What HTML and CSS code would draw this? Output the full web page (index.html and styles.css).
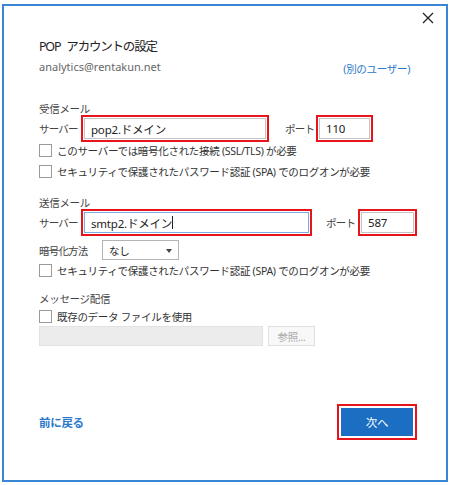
FILE: index.html
```html
<!DOCTYPE html>
<html lang="ja">
<head>
    <meta charset="UTF-8">
    <title>POP アカウントの設定</title>
    <link rel="stylesheet" href="styles.css">
</head>
<body>
    <div class="dialog">
        <div class="topbar">
            <svg class="close" width="12" height="12" viewBox="0 0 12 12">
                <path d="M1 1 L11 11 M11 1 L1 11" stroke="#222" stroke-width="1.3" fill="none"/>
            </svg>
        </div>

        <h1 class="title">POP アカウントの設定</h1>
        <div class="account">
            <span class="email">analytics@rentakun.net</span>
            <a class="link" href="#">(別のユーザー)</a>
        </div>

        <div class="section">受信メール</div>
        <div class="server-row">
            <span class="label">サーバー</span>
            <span class="hl hl-server1"><span class="field">pop2.ドメイン</span></span>
            <span class="label port-label1">ポート</span>
            <span class="hl hl-port1"><span class="field">110</span></span>
        </div>
        <div class="check check-first"><span class="box"></span>このサーバーでは暗号化された接続 (SSL/TLS) が必要</div>
        <div class="check"><span class="box"></span>セキュリティで保護されたパスワード認証 (SPA) でのログオンが必要</div>

        <div class="section section-out">送信メール</div>
        <div class="server-row">
            <span class="label">サーバー</span>
            <span class="hl hl-server2"><span class="field field-focus">smtp2.ドメイン<span class="caret"></span></span></span>
            <span class="label port-label2">ポート</span>
            <span class="hl hl-port2"><span class="field">587</span></span>
        </div>
        <div class="enc-row">
            <span class="label">暗号化方法</span>
            <span class="select">なし<span class="arrow"></span></span>
        </div>
        <div class="check"><span class="box"></span>セキュリティで保護されたパスワード認証 (SPA) でのログオンが必要</div>

        <div class="section section-msg">メッセージ配信</div>
        <div class="check check-file"><span class="box"></span>既存のデータ ファイルを使用</div>
        <div class="file-row">
            <span class="file-path"></span>
            <span class="browse">参照...</span>
        </div>

        <div class="footer">
            <a class="back" href="#">前に戻る</a>
            <span class="hl hl-next"><span class="next">次へ</span></span>
        </div>
    </div>
</body>
</html>
```

FILE: styles.css
```css
body {
    margin: 0;
    background-color: white;
    font-family: "Noto Sans", "Noto Sans CJK JP", sans-serif;
    font-size: 10.5px;
    letter-spacing: -0.3px;
    color: #444;
}
.dialog {
    box-sizing: border-box;
    width: 446px;
    height: 478px;
    margin: 4px 0 0 2px;
    border: 2px solid #3a86d6;
    padding: 0 0 0 35px;
    display: flex;
    flex-direction: column;
}
.topbar {
    display: flex;
    justify-content: flex-end;
    padding: 6px 12px 0 0;
    height: 14px;
}
.title {
    margin: 12px 0 0 0;
    font-size: 12.5px;
    letter-spacing: -1.2px;
    word-spacing: 4px;
    font-weight: normal;
    color: #222;
    line-height: 18px;
}
.account {
    display: flex;
    justify-content: space-between;
    align-items: flex-end;
    padding-right: 36px;
    line-height: 16px;
    margin-top: 3px;
}
.email {
    font-size: 11px;
    letter-spacing: 0;
    color: #666;
}
.link {
    color: #2a78cc;
    text-decoration: none;
    margin-bottom: -2px;
}
.section {
    margin-top: 26px;
    line-height: 16px;
}
.section-out {
    margin-top: 13px;
}
.section-msg {
    margin-top: 10px;
}
.server-row {
    display: flex;
    align-items: center;
    height: 27px;
    margin-top: -2px;
}
.label {
    width: 42px;
    flex-shrink: 0;
    white-space: nowrap;
    letter-spacing: -0.8px;
}
.hl {
    box-sizing: border-box;
    display: inline-block;
    flex-shrink: 0;
    border: 2px solid #e8141c;
    padding: 1px;
    height: 27px;
}
.hl-server1 {
    width: 188px;
}
.port-label1 {
    margin-left: 16px;
    width: 31px;
}
.hl-port1 {
    width: 57px;
}
.hl-server2 {
    width: 231px;
}
.port-label2 {
    margin-left: 14px;
    width: 32px;
}
.hl-port2 {
    width: 59px;
}
.field {
    box-sizing: border-box;
    display: flex;
    align-items: center;
    height: 100%;
    border: 1px solid #c4c4c4;
    padding-left: 6px;
    color: #222;
    font-size: 11.5px;
    letter-spacing: -0.2px;
}
.field-focus {
    border-color: #7aaee0;
}
.caret {
    display: inline-block;
    width: 1px;
    height: 13px;
    background-color: #222;
}
.check {
    display: flex;
    align-items: center;
    height: 21px;
    color: #333;
    white-space: nowrap;
}
.check-first {
    margin-top: -2px;
}
.box {
    box-sizing: border-box;
    flex-shrink: 0;
    width: 13px;
    height: 13px;
    border: 1px solid #9a9a9a;
    margin-right: 5px;
}
.enc-row {
    display: flex;
    align-items: center;
    margin-top: 4px;
    height: 20px;
}
.enc-row .label {
    width: 63px;
}
.select {
    box-sizing: border-box;
    width: 77px;
    height: 20px;
    border: 1px solid #b4b4b4;
    display: flex;
    align-items: center;
    padding-left: 6px;
    color: #222;
    position: relative;
}
.arrow {
    position: absolute;
    right: 6px;
    top: 8px;
    border-left: 3px solid transparent;
    border-right: 3px solid transparent;
    border-top: 4px solid #444;
}
.check-file {
    height: 18px;
}
.file-row {
    display: flex;
    margin-top: 1px;
    height: 20px;
}
.file-path {
    width: 224px;
    background-color: #ececec;
    border: 1px solid #e2e2e2;
    box-sizing: border-box;
}
.browse {
    box-sizing: border-box;
    width: 47px;
    margin-left: 5px;
    border: 1px solid #e0e0e0;
    background-color: #f8f8f8;
    color: #aaa;
    display: flex;
    align-items: center;
    justify-content: center;
}
.footer {
    margin-top: auto;
    margin-bottom: 40px;
    display: flex;
    justify-content: space-between;
    align-items: center;
    padding-right: 29px;
}
.back {
    color: #2a78cc;
    text-decoration: none;
    font-size: 11.5px;
    font-weight: bold;
}
.hl-next {
    width: 80px;
    height: 36px;
    padding: 2px;
    background-color: white;
}
.next {
    display: flex;
    align-items: center;
    justify-content: center;
    height: 100%;
    background-color: #1b6ec2;
    color: white;
    font-size: 11.5px;
}
```
